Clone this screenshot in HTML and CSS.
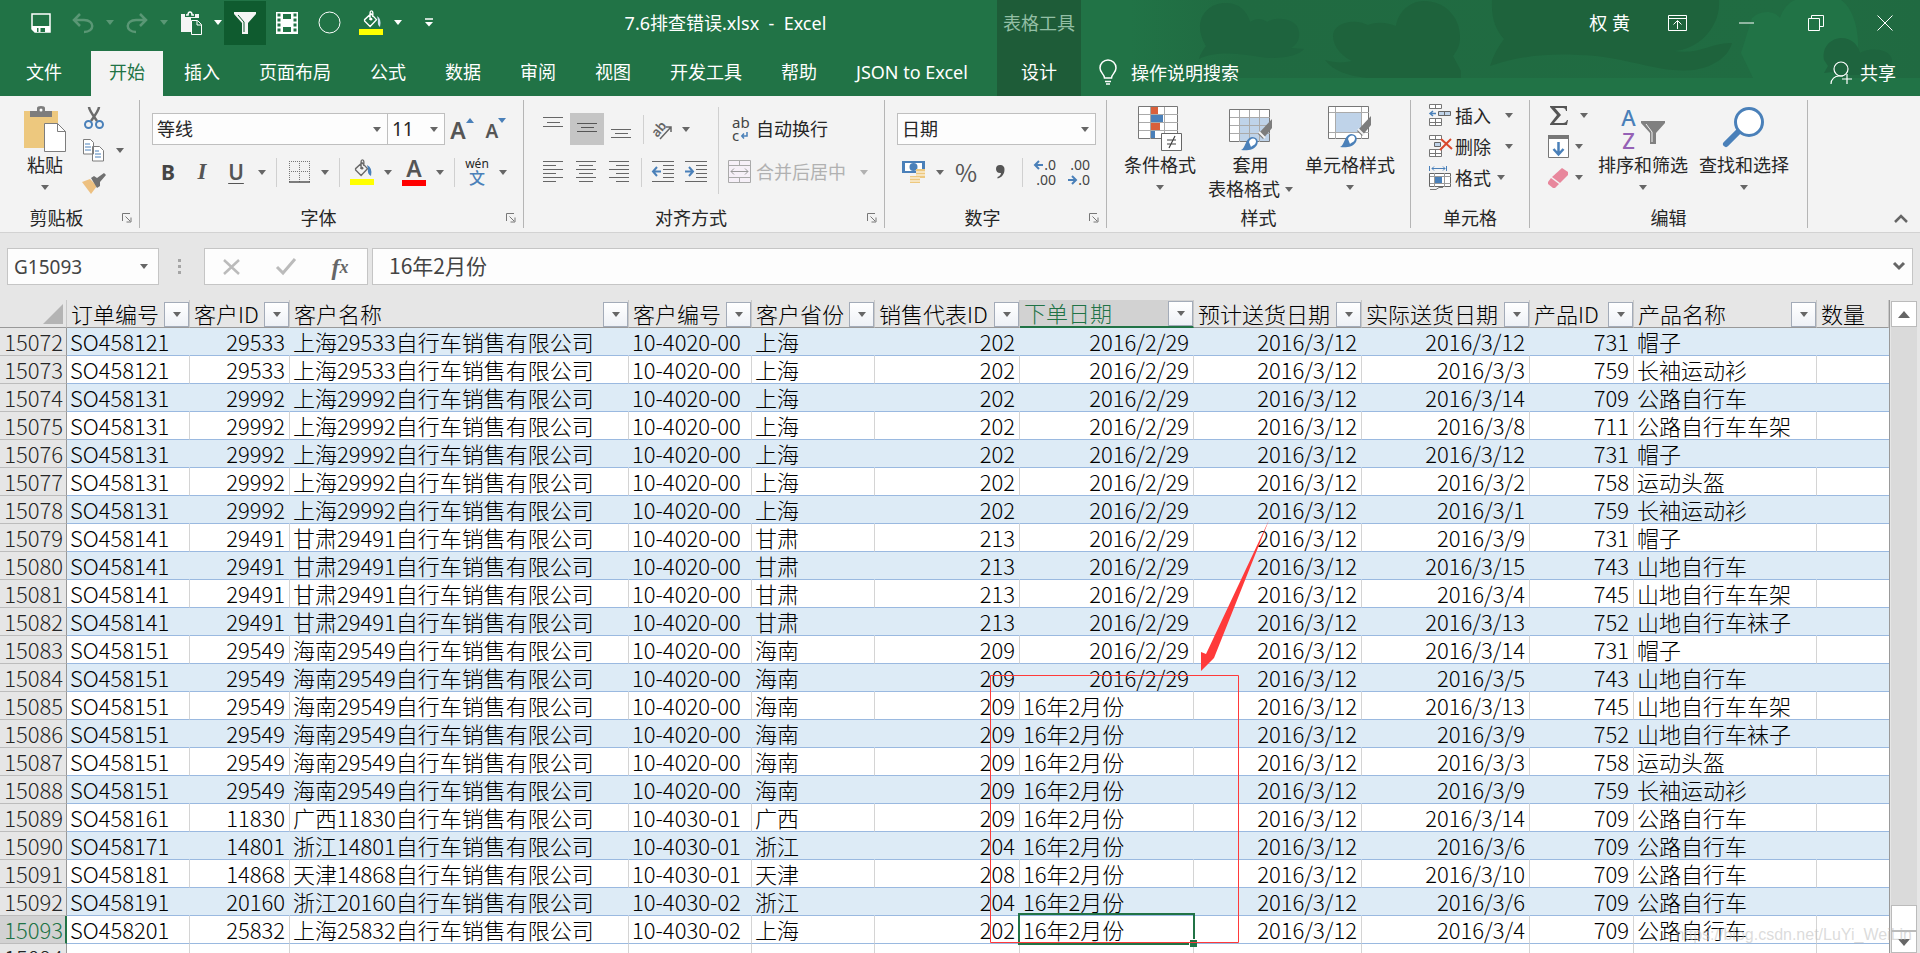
FILE: index.html
```html
<!DOCTYPE html>
<html lang="zh-CN">
<head>
<meta charset="utf-8">
<title>7.6排查错误.xlsx - Excel</title>
<link rel="stylesheet" href="styles.css">
</head>
<body>
<svg class="defs" aria-hidden="true">
  <symbol id="launcher" viewBox="0 0 10 10"><path d="M.5 8V.5H8M3.500 3.500 8 8M9 4.500V9H4.500" fill="none" stroke="#777"/></symbol>
  <symbol id="bucket" viewBox="0 0 24 24"><path d="M5 10.500 12 4l6 6.500-7 7.500-6-6zM11 11V3q0-2 1.500-2T14 3v4.500" fill="none" stroke="currentColor" stroke-width="1.500"/><circle cx="12" cy="10" r="1.500" fill="currentColor"/></symbol>
  <symbol id="brush" viewBox="0 0 32 32"><path d="M31 0v9L22 20l-5-5z" fill="#7d7d7d"/><path d="m18 13 6 6" stroke="#f3f3f3" stroke-width="2"/><path d="M0 31c5-2 4-12 11-13 5 0 7 4 5 8-3 5-10 6-16 5z" fill="#4a80b9"/><path d="M8 23c1-4 6-5 7-1 0 4-3 4-5 6" fill="#fff"/></symbol>
</svg>

<header class="top">
  <svg class="art" viewBox="0 0 790 78" aria-hidden="true">
    <defs>
      <linearGradient id="fade"><stop offset="0" stop-color="#206a41" stop-opacity="0"/><stop offset=".14" stop-color="#206a41"/><stop offset=".82" stop-color="#206c42"/><stop offset="1" stop-color="#206a41"/></linearGradient>
    </defs>
    <rect width="790" height="78" fill="url(#fade)"/>
    <path d="M76 46C62 24 74 3 96 3c13 0 21 8 24 19 6-4 12-4 17 0 8-6 31-4 32 10 1 8-3 13-8 16l13 1c-6 7-24 11-44 8-24-4-45-6-61 2 1-5 4-9 7-13z" fill="#1e643e"/>
    <path d="M203 36c0-14 22-18 35-11 10-4 20-2 28 1 2-14 14-25 28-25 20 0 36 15 36 36 0 8-3 14-7 19l8 15v7h-94c-18-2-34-7-42-18 14 4 20 2 27 1-9-4-19-14-19-25z" fill="#1e633c"/>
    <path d="M362 0h227c2 28-22 50-45 51 26 4 38-9 58-8-4 15-20 24-38 27-34 3-60-10-98-14-42-3-70-2-106 10 3-10 8-19 14-27-8-9-13-20-12-39z" fill="#1e633c"/>
    <path d="M622 18c8-8 22-8 28 0 3-9 8-15 15-18h46c14 9 20 37 16 62l-18 16h-86l-12-25z" fill="#217346"/>
    <path d="M694 60c-2-12 5-21 17-22 11 0 17 7 19 15 8-6 31-5 32 7 0 8-9 13-19 15H707l-5-3-8 1 4-7z" fill="#1e643e"/>
  </svg>

  <div class="titlebar">
    <div class="qat">
      <button aria-label="保存"><svg width="20" height="20"><path d="M1 1h18v18H4l-3-3z" fill="none" stroke="#fff" stroke-width="1.500"/><path d="M1 13h18v6H4l-3-3z" fill="#fff"/><path d="M6 15h8v4H6z" fill="#217346"/><path d="M7.500 15h2v4h-2z" fill="#fff"/></svg></button>
      <button class="off" aria-label="撤消"><svg width="22" height="20"><path d="M2 7h10c11 0 11 12 0 12M8 1 2 7l6 6" fill="none" stroke="currentColor" stroke-width="2.500"/></svg></button>
      <button class="drop off" aria-label="撤消列表"><i class="caret"></i></button>
      <button class="off" aria-label="恢复"><svg width="22" height="20"><path d="M20 7H10c-11 0-11 12 0 12M14 1l6 6-6 6" fill="none" stroke="currentColor" stroke-width="2.500"/></svg></button>
      <button class="drop off" aria-label="恢复列表"><i class="caret"></i></button>
      <button aria-label="粘贴"><svg width="22" height="24"><path d="M1 3h4v3h10V3h4v4h-8v14H1z" fill="#f5f5f5"/><path d="M6 4h2c0-4 4-4 4 0h2" fill="none" stroke="#fff" stroke-width="1.500"/><path d="M11.500 9.500h6l4 4v10h-10z" fill="#217346" stroke="#fff"/><path d="M17 9.500V14h4.500" fill="none" stroke="#fff"/></svg></button>
      <button class="drop" aria-label="粘贴选项"><i class="caret"></i></button>
      <button class="pressed" aria-label="筛选"><svg width="22" height="22"><path d="M0 0h22v2l-8 9v11H8V11L0 2z" fill="#f5f5f5"/><path d="m4 3 6 7v10" fill="none" stroke="#0f5b2f"/></svg></button>
      <button aria-label="表格"><svg width="22" height="22"><path d="M0 0h22v22H0z" fill="#fff"/><path d="M1.500 1.500h3v3h-3zm0 5h3v3h-3zm0 5h3v3h-3zm0 5h3v3h-3zm16-15h3v3h-3zm0 5h3v3h-3zm0 5h3v3h-3zm0 5h3v3h-3zM7 2h8v5H7zM7 15h8v5H7z" fill="#217346"/></svg></button>
      <button aria-label="椭圆"><svg width="23" height="23"><circle cx="11.500" cy="11.500" r="10.500" fill="none" stroke="#fff"/></svg></button>
      <button aria-label="填充颜色"><svg width="24" height="26"><use href="#bucket" width="24" height="22"/><path d="M18 6q5 3 3 11-3-2-2-7z" fill="#cfe0f3"/><path d="M0 19h24v6H0z" fill="#ff0"/></svg></button>
      <button class="drop" aria-label="颜色列表"><i class="caret"></i></button>
      <button class="wide" aria-label="自定义快速访问工具栏"><svg width="8" height="9"><path d="M0 1h8" stroke="#fff" stroke-width="1.500"/><path d="M0 4h8L4 8.500z" fill="#fff"/></svg></button>
    </div>
    <h1 class="doc">7.6排查错误.xlsx&nbsp; -&nbsp; Excel</h1>
  </div>
  <div class="context">表格工具</div>
  <div class="account">
    <span class="user">权 黄</span>
    <button aria-label="功能区显示选项"><svg width="19" height="16"><path d="M.5.5h18v15H.5zM.5 3.500h18M9.500 14V6M5.500 9.500l4-4 4 4" fill="none" stroke="#fff"/></svg></button>
    <button aria-label="最小化"><svg width="15" height="2"><path d="M0 1h15" stroke="#fff"/></svg></button>
    <button aria-label="还原"><svg width="16" height="16"><path d="M.5 3.500h11v12H.5zM3.500 3V.5h12v11H12" fill="none" stroke="#fff"/></svg></button>
    <button aria-label="关闭"><svg width="16" height="16"><path d="m.5.5 15 15m0-15-15 15" stroke="#fff"/></svg></button>
  </div>

  <nav class="tabs">
    <a class="file" href="#file">文件</a>
    <a class="active" href="#home">开始</a>
    <a href="#insert">插入</a>
    <a href="#layout">页面布局</a>
    <a href="#formulas">公式</a>
    <a href="#data">数据</a>
    <a href="#review">审阅</a>
    <a href="#view">视图</a>
    <a href="#dev">开发工具</a>
    <a href="#help">帮助</a>
    <a href="#json">JSON to Excel</a>
  </nav>
  <a class="context design" href="#design">设计</a>
  <div class="assist">
    <button class="tell"><svg width="18" height="25"><path d="M5.500 18c0-4-4.500-5-4.500-10a8 8 0 0 1 16 0c0 5-4.500 6-4.500 10zM6 21.500h6M7 24h4" fill="none" stroke="#fff" stroke-width="1.500"/></svg>操作说明搜索</button>
    <button class="share"><svg width="23" height="24"><circle cx="11" cy="8" r="7" fill="none" stroke="#fff" stroke-width="1.200"/><path d="M1 23c0-5 4-8 8-8h4M17 13v10M12 18h10" fill="none" stroke="#fff" stroke-width="1.200"/></svg>共享</button>
  </div>
</header>

<main class="ribbon">
  <section class="group clip">
    <div class="body">
      <button class="big">
        <svg width="42" height="46"><path d="M0 5h34v37H0z" fill="#edc87e"/><path d="M6 5h7V2q0-2 4-2t4 2v3h7v6H6z" fill="#7d7d7d"/><circle cx="17" cy="4" r="1.500" fill="#fff"/><path d="M20.500 17.500h13l8 8v20h-21z" fill="#fff" stroke="#7d7d7d"/><path d="M33.500 17.500v8h8" fill="none" stroke="#7d7d7d"/></svg>
        <span>粘贴</span><i class="caret"></i>
      </button>
      <div class="stack">
        <div class="line"><button class="ico" aria-label="剪切"><svg width="20" height="22"><path d="M5 0q0 3 8 14M15 0q0 3-8 14" fill="none" stroke="#6a6a6a" stroke-width="2.500"/><circle cx="4.500" cy="17.500" r="3.500" fill="none" stroke="#4a80b9" stroke-width="2"/><circle cx="15.500" cy="17.500" r="3.500" fill="none" stroke="#4a80b9" stroke-width="2"/></svg></button></div>
        <div class="line"><button class="ico" aria-label="复制"><svg width="22" height="23"><path d="M.5.5h7l3 3V15H.5zM9.500 7.500h7l4 4V22h-11z" fill="#fff" stroke="#7d7d7d"/><path d="M2 5h5M2 8h6M2 11h6M12 12h4M12 15h6M12 18h6" stroke="#4a80b9"/></svg></button><button class="drop" aria-label="复制选项"><i class="caret"></i></button></div>
        <div class="line"><button class="ico" aria-label="格式刷"><svg width="24" height="21"><path d="M0 9 8 6l7 7-6 8z" fill="#edc080"/><path d="m9 5 3-2 3 2 7-5 2 2-6 7 0 4-3 2z" fill="#707070"/></svg></button></div>
      </div>
    </div>
    <footer><span>剪贴板</span><button aria-label="剪贴板设置"><svg width="10" height="10"><use href="#launcher"/></svg></button></footer>
  </section>

  <section class="group font">
    <div class="body rows">
      <div class="line">
        <div class="combo family"><select aria-label="字体"><option>等线</option></select><i class="caret"></i></div>
        <div class="combo size"><select aria-label="字号"><option>11</option></select><i class="caret"></i></div>
        <button class="ico grow" aria-label="增大字号"><span class="glyph a1">A</span><svg width="8" height="5"><path d="M0 5h8L4 0z" fill="#4a80b9"/></svg></button>
        <button class="ico grow" aria-label="减小字号"><span class="glyph a2">A</span><svg width="8" height="5"><path d="M0 0h8L4 5z" fill="#4a80b9"/></svg></button>
      </div>
      <div class="line">
        <button class="ico glyph b">B</button><button class="ico glyph i">I</button><button class="ico glyph u">U</button>
        <button class="drop" aria-label="下划线"><i class="caret"></i></button><i class="sep"></i>
        <button class="ico" aria-label="边框"><svg width="21" height="22"><path d="M.5 0v21M20.500 0v21M10.500 0v21M0 .5h21M0 10.500h21" stroke="#777" stroke-dasharray="1 1"/><path d="M0 21h21" stroke="#555" stroke-width="1.500"/></svg></button>
        <button class="drop" aria-label="边框选项"><i class="caret"></i></button><i class="sep"></i>
        <button class="ico" aria-label="填充颜色"><svg width="24" height="26" color="#6a6a6a"><use href="#bucket" width="24" height="22"/><path d="M17 6q6 3 4 11-4-2-3-7z" fill="#4a80b9"/><path d="M0 20h24v6H0z" fill="#ff0"/></svg></button>
        <button class="drop" aria-label="填充选项"><i class="caret"></i></button>
        <button class="ico inkbtn" aria-label="字体颜色"><span class="glyph">A</span><i class="ink"></i></button>
        <button class="drop" aria-label="字体颜色选项"><i class="caret"></i></button><i class="sep"></i>
        <button class="ico pinyin"><span>wén</span><b>文</b></button>
        <button class="drop" aria-label="拼音选项"><i class="caret"></i></button>
      </div>
    </div>
    <footer><span>字体</span><button aria-label="字体设置"><svg width="10" height="10"><use href="#launcher"/></svg></button></footer>
  </section>

  <section class="group align">
    <div class="body">
      <div class="rows">
        <div class="line">
          <button class="ico" aria-label="顶端对齐"><svg width="20" height="24"><path d="M0 .5h20M4 5.500h13M0 9.500h20" stroke="#666"/></svg></button>
          <button class="ico on" aria-label="垂直居中"><svg width="20" height="24"><path d="M0 6.500h20M4 10.500h13M0 14.500h20" stroke="#555"/></svg></button>
          <button class="ico" aria-label="底端对齐"><svg width="20" height="24"><path d="M0 12.500h20M4 16.500h13M0 20.500h20" stroke="#666"/></svg></button>
          <i class="sep"></i>
          <button class="ico slim" aria-label="方向"><svg width="22" height="22"><text x="0" y="15" transform="rotate(-50 8 12)" class="tilt">ab</text><path d="M8 21 19 9M14 9h5v5" fill="none" stroke="#666" stroke-width="1.500"/></svg></button>
          <button class="drop" aria-label="方向选项"><i class="caret"></i></button>
        </div>
        <div class="line">
          <button class="ico" aria-label="左对齐"><svg width="20" height="22"><path d="M0 .5h20M0 4.500h13M0 8.500h20M0 12.500h13M0 16.500h20M0 20.500h13" stroke="#666"/></svg></button>
          <button class="ico" aria-label="居中"><svg width="20" height="22"><path d="M0 .5h20M3 4.500h14M0 8.500h20M3 12.500h14M0 16.500h20M3 20.500h14" stroke="#666"/></svg></button>
          <button class="ico" aria-label="右对齐"><svg width="20" height="22"><path d="M0 .5h20M7 4.500h13M0 8.500h20M7 12.500h13M0 16.500h20M7 20.500h13" stroke="#666"/></svg></button>
          <i class="sep"></i>
          <button class="ico" aria-label="减少缩进"><svg width="22" height="22"><path d="M0 .5h22M11 4.500h11M11 8.500h11M11 12.500h11M11 16.500h11M0 20.500h22" stroke="#666"/><path d="M1 10.500h8M5 6l-4 4.500L5 15" fill="none" stroke="#4a80b9" stroke-width="2"/></svg></button>
          <button class="ico" aria-label="增加缩进"><svg width="22" height="22"><path d="M0 .5h22M11 4.500h11M11 8.500h11M11 12.500h11M11 16.500h11M0 20.500h22" stroke="#666"/><path d="M0 10.500h8M4 6l4 4.500L4 15" fill="none" stroke="#4a80b9" stroke-width="2"/></svg></button>
        </div>
      </div>
      <i class="sep tall"></i>
      <div class="rows">
        <button class="labelled"><span class="wrapico"><span>ab</span><span>c<svg width="7" height="7"><path d="M6 0v4H1M3 1.500.8 4 3 6.500" fill="none" stroke="#4a80b9" stroke-width="1.500"/></svg></span></span>自动换行</button>
        <button class="labelled dim"><svg width="23" height="24"><path d="M.5.5h22v22H.5zM.5 5.500h22M.5 17.500h22M11.500.5v5M11.500 17.500v5" fill="#f6f0f8" stroke="#aaa"/><path d="M3 11.500h17M6 8.500l-3 3 3 3M17 8.500l3 3-3 3" fill="none" stroke="#999"/></svg>合并后居中<i class="caret"></i></button>
      </div>
    </div>
    <footer><span>对齐方式</span><button aria-label="对齐设置"><svg width="10" height="10"><use href="#launcher"/></svg></button></footer>
  </section>

  <section class="group number">
    <div class="body rows">
      <div class="line"><div class="combo fmt"><select aria-label="数字格式"><option>日期</option></select><i class="caret"></i></div></div>
      <div class="line">
        <button class="ico" aria-label="会计数字格式"><svg width="24" height="23"><path d="M0 0h23v12H0z" fill="#4a80b9"/><path d="M3 2h17v8H3z" fill="#fff"/><ellipse cx="11.500" cy="6" rx="4" ry="4" fill="#4a80b9"/><path d="M14 8h9v9h-5v5H8v-7h6z" fill="#edc87e"/><path d="M14 11h9M14 14h9M8 17h10M8 20h10" stroke="#fff"/></svg></button>
        <button class="drop" aria-label="会计选项"><i class="caret"></i></button>
        <button class="ico pct">%</button>
        <button class="ico" aria-label="千位分隔样式"><svg width="9" height="14"><path d="M4 0a4 4 0 0 1 4.500 4.500C8.500 9 6 12.500 1.500 13.500V12C4 11 5 9.500 5 8 2 8.500 0 6.500 0 4a4 4 0 0 1 4-4z" fill="#555"/></svg></button>
        <i class="sep"></i>
        <button class="ico dec"><span><svg width="9" height="8"><path d="M9 4H2M5 0 1 4l4 4" fill="none" stroke="#4a80b9" stroke-width="2"/></svg>.0</span><span>.00</span></button>
        <button class="ico dec"><span>.00</span><span><svg width="9" height="8"><path d="M0 4h7M4 0l4 4-4 4" fill="none" stroke="#4a80b9" stroke-width="2"/></svg>.0</span></button>
      </div>
    </div>
    <footer><span>数字</span><button aria-label="数字设置"><svg width="10" height="10"><use href="#launcher"/></svg></button></footer>
  </section>

  <section class="group styles">
    <div class="body">
      <button class="big">
        <svg width="44" height="46"><path d="M.5.5h39v32H.5z" fill="#fff" stroke="#777"/><path d="M12.500 1v32M26.500 1v32M1 8.500h39M1 16.500h39M1 24.500h39" stroke="#aaa"/><path d="M13 1h7v7h-7zM13 17h9v7h-9z" fill="#d9603b"/><path d="M13 9h12v7H13zM13 25h4v7h-4z" fill="#4a80b9"/><path d="M23.500 27.500h20v17h-20z" fill="#fff" stroke="#666"/><path d="M29 34h9M29 38h9M37 30l-6 12" stroke="#444" stroke-width="1.200"/></svg>
        <span>条件格式</span><i class="caret"></i>
      </button>
      <button class="big">
        <svg width="44" height="46"><path d="M.5 3.500h40v32H.5z" fill="#fff" stroke="#777"/><path d="M11 12h29v23H11z" fill="#bfd3e9"/><path d="M10.500 4v32M20.500 4v32M30.500 4v32M1 11.500h40M1 19.500h40M1 27.500h40" stroke="#aaa"/><use href="#brush" x="12" y="13" width="32" height="32"/></svg>
        <span>套用</span><span>表格格式<i class="caret"></i></span>
      </button>
      <button class="big">
        <svg width="44" height="46"><path d="M.5.5h40v32H.5z" fill="#fff" stroke="#777"/><path d="M7 7h27v19H7z" fill="#bfd3e9"/><path d="M7.500 1v32M33.500 1v32M1 6.500h40M1 26.500h40" stroke="#aaa"/><use href="#brush" x="12" y="10" width="32" height="32"/></svg>
        <span>单元格样式</span><i class="caret"></i>
      </button>
    </div>
    <footer><span>样式</span></footer>
  </section>

  <section class="group cells">
    <div class="body trio">
      <button class="labelled"><svg width="23" height="23"><path d="M.5.5h12v4H.5zM6.500.5v4M.5 14.500h12v7H.5zM6.500 14.500v7M.5 18.500h12" fill="#fff" stroke="#777"/><path d="M9.500 7.500h12v4h-12zM15.500 7.500v4" fill="#bfd3e9" stroke="#666"/><path d="M1 9.500h6M4 7l-3 2.500L4 12" fill="none" stroke="#4a80b9" stroke-width="1.500"/></svg>插入<i class="caret"></i></button>
      <button class="labelled"><svg width="23" height="23"><path d="M.5.5h12v4H.5zM6.500.5v4M.5 14.500h12v7H.5zM6.500 14.500v7M.5 18.500h12" fill="#fff" stroke="#777"/><path d="M5.500 7.500h6v4h-6z" fill="#bfd3e9" stroke="#666"/><path d="m12 4 11 10M22 4 11 15" stroke="#d9482b" stroke-width="2"/></svg>删除<i class="caret"></i></button>
      <button class="labelled near"><svg width="23" height="24"><path d="M.5 0v5M17.500 0v5M3 2.500h13M5 .5l-2 2 2 2M14 .5l2 2-2 2" fill="none" stroke="#4a80b9"/><path d="M.5 7.500h21v13H.5z" fill="#fff" stroke="#666"/><path d="M5.500 7v14M15.500 7v14M1 10.500h21M1 17.500h21" stroke="#999"/><path d="M6 11h7v6H6z" fill="#4a80b9"/><path d="M1 23.500h6l3-2h4" fill="none" stroke="#777"/></svg>格式<i class="caret"></i></button>
    </div>
    <footer><span>单元格</span></footer>
  </section>

  <section class="group edit">
    <div class="body">
      <div class="trio">
        <button class="labelled sum"><svg width="22" height="22"><path d="M2 1h17v5h-1q-.5-3-3-3H7l6 7-7 8h9q3 0 4-3h1l-1 5H2v-1l7-9-7-8z" fill="#555"/></svg><i class="caret"></i></button>
        <button class="labelled"><svg width="22" height="23"><path d="M.5.5h20v22H.5z" fill="#fff" stroke="#777"/><path d="M0 0h21v4H0z" fill="#777"/><path d="M10.500 7v12M5.500 14l5 5.500 5-5.500" fill="none" stroke="#4a80b9" stroke-width="2.500"/></svg><i class="caret"></i></button>
        <button class="labelled"><svg width="22" height="22"><path d="m14 1 6 4v3l-8 8-8-6z" fill="#e8879c"/><path d="m3 11 8 6-4 4H5l-5-4v-2z" fill="#e8879c"/></svg><i class="caret"></i></button>
      </div>
      <button class="big">
        <span class="sortico"><span><b>A</b><b class="z">Z</b></span><svg width="24" height="23"><path d="M0 0h24v2l-9 10v11H9V12L0 2z" fill="#808080"/><path d="m5 3 6 8v10" fill="none" stroke="#f3f3f3"/></svg></span>
        <span>排序和筛选</span><i class="caret"></i>
      </button>
      <button class="big">
        <svg width="42" height="46"><path d="M15 26 3 38" stroke="#4a80b9" stroke-width="6" stroke-linecap="round"/><circle cx="26" cy="16" r="13.500" fill="#fff" stroke="#4a80b9" stroke-width="3"/></svg>
        <span>查找和选择</span><i class="caret"></i>
      </button>
    </div>
    <footer><span>编辑</span></footer>
  </section>
  <button class="collapse" aria-label="折叠功能区"><svg width="14" height="9"><path d="m1 8 6-6 6 6" fill="none" stroke="#666" stroke-width="2.500"/></svg></button>
</main>

<div class="fbar">
  <div class="combo name"><input aria-label="名称框" value="G15093"><i class="caret"></i></div>
  <i class="dots"></i>
  <div class="fbtns">
    <button aria-label="取消"><svg width="18" height="16"><path d="m1 1 15 14M16 1 1 15" stroke="#bbb" stroke-width="2.500"/></svg></button>
    <button aria-label="输入"><svg width="20" height="17"><path d="m1 9 6 6L19 1" fill="none" stroke="#bbb" stroke-width="3"/></svg></button>
    <button class="fx"><i>f</i><i class="x">x</i></button>
  </div>
  <div class="combo formula"><input aria-label="编辑栏" value="16年2月份"><svg width="12" height="9"><path d="m1 1 5 5 5-5" fill="none" stroke="#666" stroke-width="3"/></svg></div>
</div>

<div class="sheet">
  <div class="grid">
    <table>
      <colgroup><col class="c0"><col class="c1"><col class="c2"><col class="c3"><col class="c1"><col class="c1"><col class="c6"><col class="c7"><col class="c8"><col class="c8"><col class="c10"><col class="c11"><col></colgroup>
      <thead><tr id="head"></tr></thead>
      <tbody id="rows"></tbody>
    </table>
    <svg class="mark" width="282" height="426" aria-hidden="true"><path d="M1.500 156.500h248v267H1.500z" fill="none" stroke="#ff3a3a"/><path d="M280 1 225 139l-13 13V133l5 2z" fill="#ff3a3a"/></svg>
  </div>
  <div class="vbar">
    <button aria-label="向上滚动"><svg width="12" height="7"><path d="M0 7h12L6 0z" fill="#666"/></svg></button>
    <div class="track"></div>
    <div class="thumb"></div>
    <button class="down" aria-label="向下滚动"><svg width="12" height="7"><path d="M0 0h12L6 7z" fill="#666"/></svg></button>
  </div>
  <span class="stamp">https://blog.csdn.net/LuYi_WeiLin</span>
</div>
<script src="app.js"></script>
</body>
</html>
```
FILE: styles.css
```css
* { box-sizing: border-box; }
body {
  margin: 0;
  height: 100vh;
  display: flex;
  flex-direction: column;
  overflow: hidden;
  background: #e6e6e6;
  color: #262626;
  font: 18px/24px "Noto Sans", "Noto Sans CJK SC", sans-serif;
}
button, select, input { font: inherit; color: inherit; background: none; border: 0; padding: 0; margin: 0; }
button { display: flex; align-items: center; justify-content: center; white-space: nowrap; }
svg { flex: none; display: block; overflow: visible; }
a { color: inherit; text-decoration: none; }
.defs { position: absolute; width: 0; height: 0; }
.caret { flex: none; width: 0; height: 0; border: 4px solid transparent; border-top: 5px solid #666; border-bottom: 0; }

/* title bar and tabs */
.top {
  position: relative;
  display: grid;
  grid-template: 51px 45px / auto 84px 1fr;
  background: #217346;
  color: #fff;
}
.art { position: absolute; right: 0; top: 0; width: 790px; height: 78px; }
.titlebar { display: flex; padding-bottom: 5px; }
.qat { display: flex; padding-left: 20px; align-items: center; }
.qat button { width: 42px; height: 46px; padding-bottom: 1px; color: #fff; }
.qat .drop { width: 12px; }
.qat .wide { width: 50px; }
.qat .off { color: #5a9775; }
.qat .caret { border-top-color: currentColor; }
.qat .pressed { background: #0f5b2f; height: 44px; }
.doc { flex: 1; margin: 0; font-size: 18px; font-weight: 400; line-height: 46px; text-align: center; white-space: nowrap; }
.context { position: relative; background: #1e5c38; text-align: center; line-height: 47px; color: #93bfa5; }
.design { color: #fff; line-height: 43px; }
.account { position: relative; display: flex; justify-content: flex-end; height: 46px; line-height: 46px; }
.account button { width: 69px; padding-right: 2px; }
.user { padding-right: 14px; }
.tabs { display: flex; gap: 3px; padding-right: 11px; line-height: 43px; white-space: nowrap; }
.tabs a { padding: 0 18px; }
.tabs .file { padding: 0 26px; }
.tabs .active { background: #f3f3f3; color: #217346; }
.assist { position: relative; display: flex; justify-content: space-between; padding: 0 24px 2px 18px; }
.tell { gap: 14px; }
.share { gap: 7px; }

/* ribbon */
.ribbon { display: flex; height: 137px; padding: 4px 0; background: #f3f3f3; border-bottom: 1px solid #d2d2d2; }
.group { display: flex; flex-direction: column; justify-content: space-between; border-right: 1px solid #b5b5b5; }
.body { display: flex; }
.rows { display: flex; flex-direction: column; gap: 11px; padding-top: 13px; }
.line { display: flex; align-items: center; height: 32px; }
.group footer { display: flex; align-items: center; height: 20px; padding: 0 7px 0 0; }
.group footer span { flex: 1; padding-right: 9px; text-align: center; }
.ico { width: 34px; height: 32px; }
.slim { width: 28px; }
.drop { width: 18px; height: 32px; }
.on { background: #c5c5c5; }
.sep { flex: none; width: 1px; height: 29px; margin: 0 5px; background: #d0d0d0; }
.tall { height: 87px; margin-top: 7px; }
.big { flex-direction: column; justify-content: flex-start; padding-top: 6px; }
.big span { display: flex; align-items: center; gap: 5px; }
.big > svg { margin-bottom: 1px; }
.big > .caret { margin-top: 8px; }
.labelled { justify-content: flex-start; gap: 5px; height: 32px; }
.trio { display: flex; flex-direction: column; }
.trio .labelled { height: 31px; }

.clip { width: 140px; }
.clip .big { width: 90px; }
.clip .stack { display: flex; flex-direction: column; width: 50px; margin-left: -8px; padding-top: 1px; }
.clip .line { height: 33px; }
.clip .stack .ico { width: 24px; }
.clip .drop { margin-left: 5px; }

.font { width: 384px; }
.font .body { padding-left: 11px; }
.combo { display: grid; align-items: center; background: #fdfdfd; border: 1px solid #bfbfbf; }
.combo > * { grid-area: 1 / 1; min-width: 0; }
.combo select, .combo input { width: 100%; height: 30px; padding-left: 4px; appearance: none; outline: 0; }
.combo .caret { justify-self: end; margin-right: 6px; pointer-events: none; }
.family { width: 236px; margin-left: 1px; }
.size { width: 58px; margin-left: -1px; }
.size select { font-size: 19px; }
.grow { align-items: flex-start; gap: 0; }
.glyph { font-weight: 600; color: #555; }
.a1 { font-size: 23px; line-height: 34px; }
.a2 { font-size: 19px; line-height: 36px; }
.grow svg { margin-top: 5px; }
.b { font-size: 21px; font-weight: 700; color: #444; }
.i { font: italic 700 23px/24px "Liberation Serif", serif; }
.u { font-size: 21px; text-decoration: underline; text-underline-offset: 3px; text-decoration-thickness: 1px; }
.inkbtn { flex-direction: column; justify-content: flex-start; }
.inkbtn .glyph { font-size: 23px; line-height: 24px; }
.ink { width: 24px; height: 6px; background: #f00; }
.pinyin { flex-direction: column; font-size: 12px; line-height: 12px; }
.pinyin b { color: #4a80b9; font-size: 16px; line-height: 17px; font-weight: 500; }

.align { width: 361px; }
.align .body { padding-left: 12px; }
.align .rows:first-child { width: 177px; }
.tilt { font: 600 13px "Noto Sans", sans-serif; fill: #666; }
.wrapico { display: flex; flex-direction: column; align-items: flex-start; width: 23px; padding-left: 4px; font-size: 15px; line-height: 13px; color: #444; }
.wrapico span { display: flex; align-items: center; gap: 2px; }
.align .labelled { margin-left: 4px; }
.dim { color: #b1b1b1; }
.dim .caret { border-top-color: #b1b1b1; margin-left: 9px; }

.number { width: 222px; }
.number .body { padding-left: 12px; }
.fmt { width: 199px; }
.pct { font: 24px/24px "Noto Sans CJK SC", sans-serif; color: #555; }
.dec { flex-direction: column; align-items: flex-end; padding-right: 6px; font-size: 14px; line-height: 15px; color: #444; }
.dec span { display: flex; align-items: center; gap: 1px; }

.styles { width: 304px; }
.styles .body { gap: 12px; padding-left: 17px; }
.styles footer, .cells footer, .edit footer { padding: 0; }
.styles footer span, .cells footer span, .edit footer span { padding: 0; }
.cells { width: 119px; }
.cells .body { padding-left: 18px; }
.cells .labelled { gap: 3px; }
.cells .caret { margin-left: 11px; }
.cells .near .caret { margin-left: 3px; }
.edit { width: 278px; }
.edit .body { padding-left: 18px; }
.edit .labelled { width: 50px; gap: 5px; }
.edit .sum { gap: 10px; }
.edit .big + .big { margin-left: 11px; }
.sortico { height: 46px; align-items: flex-start; margin-bottom: 1px; }
.sortico span { flex-direction: column; gap: 0; }
.sortico b { font-size: 22px; line-height: 23px; font-weight: 500; color: #4a80b9; }
.sortico .z { color: #9561b5; }
.sortico svg { margin-top: 6px; }
.collapse { margin: auto 12px 5px auto; }

/* formula bar */
.fbar { display: flex; align-items: center; padding: 15px 7px; }
.fbar .combo, .fbtns { height: 37px; background: #fdfdfd; border: 1px solid #c5c5c5; }
.name { width: 152px; color: #444; font-size: 19px; }
.name input { padding-left: 6px; }
.fbar .name .caret { margin-right: 10px; }
.dots { width: 3px; height: 15px; margin: 0 23px 0 19px; background: repeating-linear-gradient(#a5a5a5 0 3px, transparent 3px 6px); }
.fbtns { display: flex; width: 164px; margin-right: 4px; }
.fbtns button { flex: 1; }
.fx { font: italic 700 24px/30px "Liberation Serif", serif; color: #666; }
.fx .x { font-size: 18px; }
.fbar .formula { flex: 1; font: 21px/30px "Noto Sans CJK SC", sans-serif; color: #444; }
.formula input { padding: 0 0 3px 16px; }
.formula svg { justify-self: end; margin-right: 7px; }

/* worksheet */
.sheet { position: relative; flex: 1; min-height: 0; display: flex; font-family: "Noto Sans CJK SC", sans-serif; font-size: 22px; font-weight: 300; }
.grid { position: relative; flex: 1; min-width: 0; overflow: hidden; border-right: 1px solid #999; }
table { width: 100%; table-layout: fixed; border-collapse: separate; border-spacing: 0; color: #000; }
.c0 { width: 67px; } .c1 { width: 123px; } .c2 { width: 100px; } .c3 { width: 339px; }
.c6 { width: 145px; } .c7 { width: 174px; } .c8 { width: 168px; } .c10 { width: 104px; } .c11 { width: 183px; }
th, td { height: 28px; padding: 0 4px 0 3px; line-height: 27px; font-weight: 300; white-space: nowrap; text-align: left; }
thead th { padding: 0; background: #e6e6e6; border-bottom: 1px solid #999; border-right: 1px solid #c8c8c8; }
thead div { display: flex; justify-content: space-between; align-items: flex-end; height: 27px; padding-left: 4px; }
thead button { flex: none; width: 25px; height: 25px; background: linear-gradient(#fff, #eef1f6); border: 1px solid #a3abb8; }
thead .sel { background: #d2d2d2; color: #217346; border-bottom: 2px solid #217346; }
thead .sel div { height: 26px; }
thead .corner svg { margin: 0 3px 0 auto; }
tbody th { background: #e6e6e6; border-right: 1px solid #999; border-bottom: 1px solid #bcbcbc; text-align: right; padding-right: 3px; color: #262626; }
tbody .sel { background: #d2d2d2; color: #217346; border-right: 2px solid #217346; padding-right: 2px; }
td { background: #fff; border-bottom: 1px solid #9ab9e0; border-right: 1px solid #d4d4d4; }
.band td { background: #ddebf6; border-right-color: #ddebf6; }
td:last-child { border-right: 0; }
.num { text-align: right; }
.cur { position: relative; }
.cur::before { content: ""; position: absolute; inset: -3px -2px -2px -2px; border: 2px solid #217346; }
.cur::after { content: ""; position: absolute; right: -4px; bottom: -4px; width: 7px; height: 7px; background: #217346; border: solid #fff; border-width: 1px 0 0 1px; }
.mark { position: absolute; left: 989px; top: 219px; }
.vbar { display: flex; flex-direction: column; width: 26px; margin: 1px 3px 0 1px; background: #dadada; }
.vbar button, .thumb { flex: none; width: 26px; height: 26px; background: #fff; border: 1px solid #bbb; }
.track { flex: 1; }
.vbar .down { height: 22px; }
.stamp { position: absolute; right: 8px; bottom: 6px; font: 16px/24px "Liberation Sans", sans-serif; color: rgba(190, 190, 190, .55); }
```
FILE: app.js
```js
const heads = ["订单编号", "客户ID", "客户名称", "客户编号", "客户省份", "销售代表ID", "下单日期", "预计送货日期", "实际送货日期", "产品ID", "产品名称", "数量"];

const goods = {
  709: "公路自行车", 711: "公路自行车车架", 731: "帽子", 743: "山地自行车",
  745: "山地自行车车架", 752: "山地自行车袜子", 758: "运动头盔", 759: "长袖运动衫"
};

// order, customer, province, customer code, sales rep, then [delivery day, product] pairs
const orders = [
  ["SO458121", 29533, "上海", "10-4020-00", 202, [[12, 731], [3, 759]]],
  ["SO458131", 29992, "上海", "10-4020-00", 202, [[14, 709], [8, 711], [12, 731], [2, 758], [1, 759]]],
  ["SO458141", 29491, "甘肃", "10-4020-00", 213, [[9, 731], [15, 743], [4, 745], [13, 752]]],
  ["SO458151", 29549, "海南", "10-4020-00", 209, [[14, 731], [5, 743], [13, 745], [9, 752], [3, 758], [9, 759]]],
  ["SO458161", 11830, "广西", "10-4030-01", 209, [[14, 709]]],
  ["SO458171", 14801, "浙江", "10-4030-01", 204, [[6, 709]]],
  ["SO458181", 14868, "天津", "10-4030-01", 208, [[10, 709]]],
  ["SO458191", 20160, "浙江", "10-4030-02", 204, [[6, 709]]],
  ["SO458201", 25832, "上海", "10-4030-02", 202, [[4, 709]]]
];

const filter = '<button aria-label="筛选"><i class="caret"></i></button>';
document.getElementById("head").innerHTML =
  '<th class="corner"><svg width="20" height="20"><path d="M20 0v20H0z" fill="#b4b4b4"/></svg></th>' +
  heads.map((h, i) => `<th class="${i === 6 ? "sel" : ""}"><div>${h}${i < 11 ? filter : ""}</div></th>`).join("");

let n = 15072;
let html = "";
for (const [order, id, prov, code, rep, lines] of orders) {
  for (const [day, item] of lines) {
    const last = n === 15093;
    const date = n < 15085
      ? '<td class="num">2016/2/29</td>'
      : `<td class="${last ? "cur" : ""}">16年2月份</td>`;
    html += `<tr class="${n % 2 ? "" : "band"}"><th class="${last ? "sel" : ""}">${n}</th>` +
      `<td>${order}</td><td class="num">${id}</td><td>${prov}${id}自行车销售有限公司</td>` +
      `<td>${code}</td><td>${prov}</td><td class="num">${rep}</td>${date}` +
      `<td class="num">2016/3/12</td><td class="num">2016/3/${day}</td><td class="num">${item}</td>` +
      `<td>${goods[item]}</td><td></td></tr>`;
    n++;
  }
}
html += `<tr><th>${n}</th>${"<td></td>".repeat(12)}</tr>`;
document.getElementById("rows").innerHTML = html;
```
